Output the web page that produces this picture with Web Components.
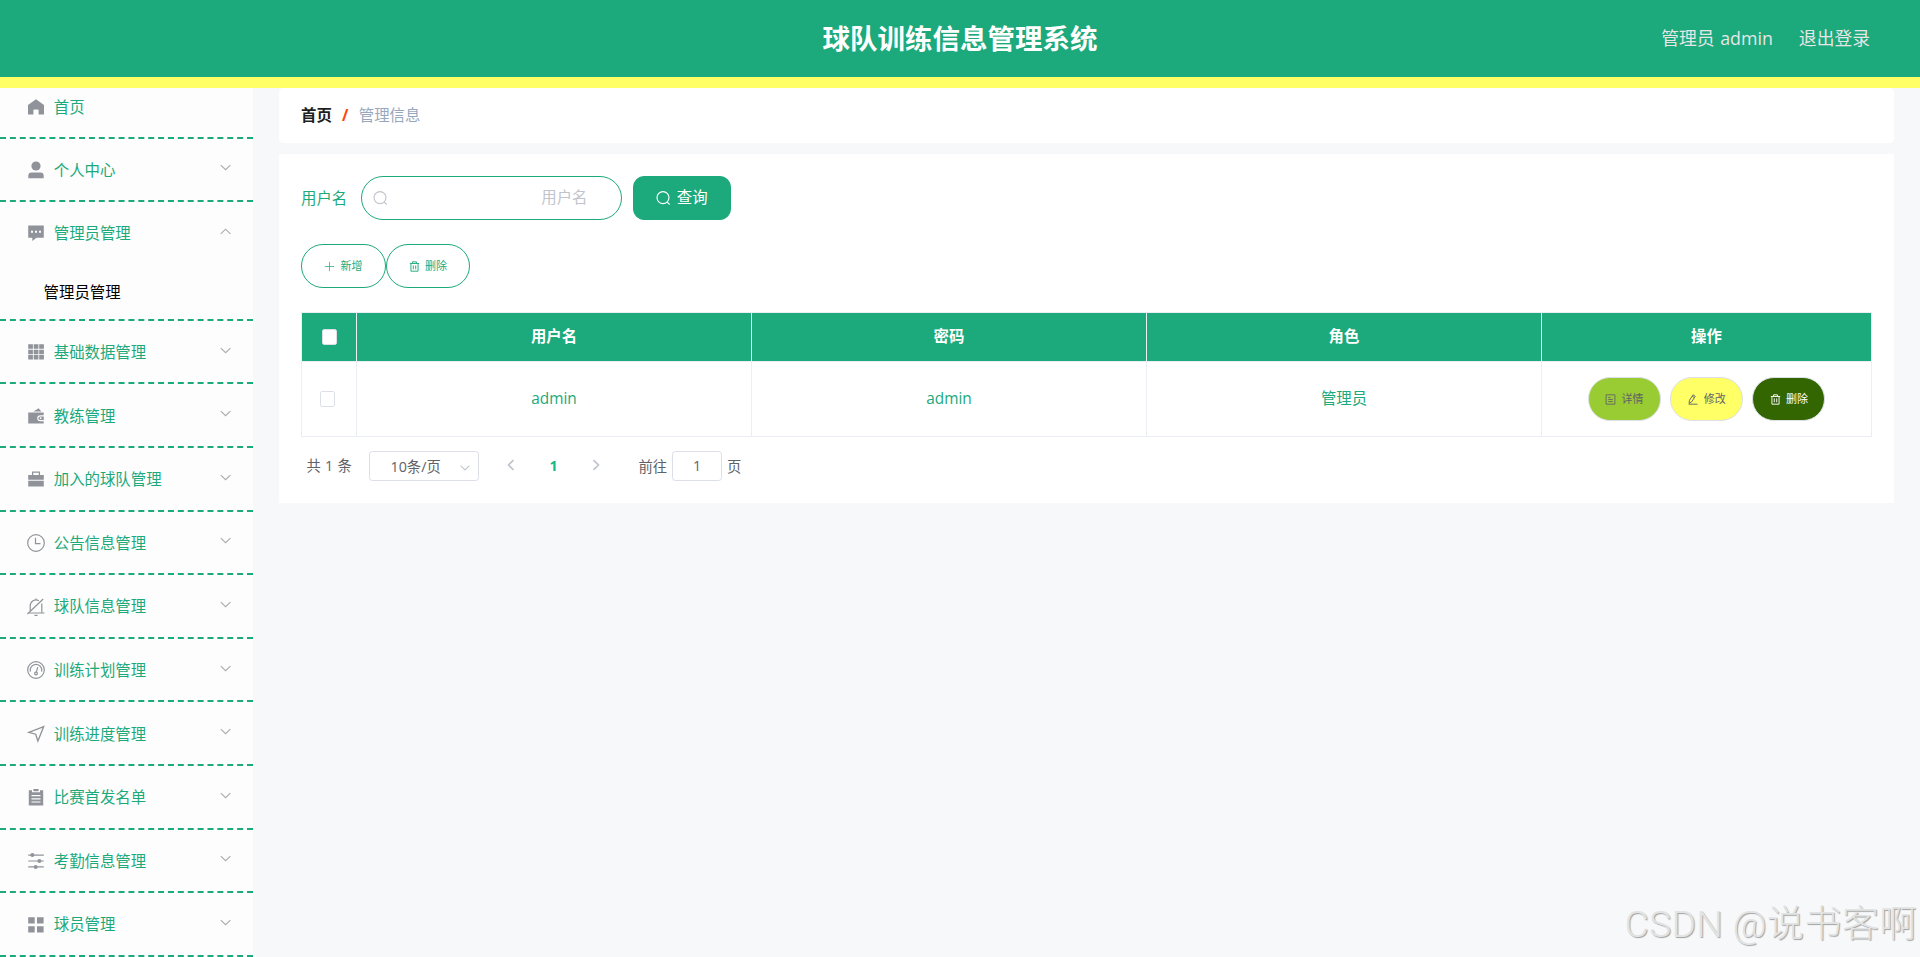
<!DOCTYPE html>
<html lang="zh-CN">
<head>
<meta charset="utf-8">
<title>球队训练信息管理系统</title>
<style>
    :root {
        --green: #1ca97b;
        --yellow: #ffff66;
        --page: #f7f8fa;
        --line: #ebeef5;
        --border: #dcdfe6;
        --muted: #909399;
    }

    body {
        margin: 0;
        height: 957px;
        overflow: hidden;
        background: var(--page);
        font-family: "Open Sans", "Noto Sans CJK SC", sans-serif;
        font-size: 15.4px;
        line-height: 1.4;
    }
</style>
</head>
<body>
<team-app></team-app>

<script>
// All glyphs share a 20x20 grid
const ICONS = {
    home: '<path fill="currentColor" d="M10 2.3 18 8v9.6h-5.4v-4.4a.8.8 0 0 0-.8-.8H8.2a.8.8 0 0 0-.8.8v4.4H2V8z"/>',
    user: '<circle cx="10" cy="6" r="4.6" fill="currentColor"/><path fill="currentColor" d="M2.3 18.2v-2.4a3.4 3.4 0 0 1 3.4-3.4h8.6a3.4 3.4 0 0 1 3.4 3.4v2.4z"/>',
    chat: '<path fill="currentColor" fill-rule="evenodd" d="M2.2 2.6h15.6v12.2H10.5L6.3 18v-3.2H2.2zM5 7.8v2h2v-2zM9 7.8v2h2v-2zM13 7.8v2h2v-2z"/>',
    grid: '<path fill="currentColor" d="M2.2 2.3h4.7v4.5H2.2zM7.7 2.3h4.7v4.5H7.7zM13.2 2.3h4.7v4.5h-4.7zM2.2 7.7h4.7v4.5H2.2zM7.7 7.7h4.7v4.5H7.7zM13.2 7.7h4.7v4.5h-4.7zM2.2 13.1h4.7v4.5H2.2zM7.7 13.1h4.7v4.5H7.7zM13.2 13.1h4.7v4.5h-4.7z"/>',
    wallet: '<path fill="currentColor" d="M7.5 5.4 12.6 2.3l2.8 3.1zM2.2 6.5h15.5v2.8h-3.5a3 3 0 0 0 0 6h3.5v2.3H2.2z"/><path fill="currentColor" d="M14.3 10.4h3.5v3.7h-3.5a1.85 1.85 0 0 1 0-3.7z"/><circle cx="14.6" cy="12.2" r=".9" fill="#fff"/>',
    briefcase: '<path fill="none" stroke="currentColor" stroke-width="1.3" d="M6.6 6.5V3.1h6.8v3.4"/><path fill="currentColor" d="M2.2 6h15.6v4.7H2.2zM2.2 11.7h15.6v5.9H2.2z"/>',
    clock: '<g fill="none" stroke="currentColor" stroke-width="1.2"><circle cx="10" cy="10" r="8.3"/><path d="M9.5 4.8v5.8h5"/></g>',
    bellOff: '<g fill="none" stroke="currentColor" stroke-width="1.2"><path d="M4.2 14.5V9a5.8 5.8 0 0 1 8.7-5.2M15.8 6.5V16M2 16h16.5M8.5 18.4h3M10 1.6v1.600M1.4 17 17.2 2"/></g>',
    meter: '<g fill="none" stroke="currentColor" stroke-width="1.2"><circle cx="10" cy="10" r="8.3"/><path d="M4.4 11.6a5.8 5.8 0 1 1 11.2 0M11.8 7.2l-1.5 5"/><circle cx="10" cy="13.5" r="1.4"/></g>',
    send: '<path fill="none" stroke="currentColor" stroke-width="1.3" d="M17.7 2.6 2.8 8.4 9.7 10.2 11.9 17z"/>',
    clipboard: '<path fill="currentColor" fill-rule="evenodd" d="M2.8 3.3H6v1.9h8V3.3h3.2v15.2H2.8zM5.5 8.1v1.1h9V8.1zM5.5 11.3v1.1h9v-1.1zM5.5 14.5v1.1h9v-1.1z"/><path fill="currentColor" d="M7.4 2h5.2v2.2H7.4z"/>',
    sliders: '<path stroke="currentColor" stroke-width="1.2" d="M2.2 4.1h15.6M2.2 10h15.6M2.2 15.9h15.6"/><g fill="currentColor"><circle cx="6.4" cy="4.1" r="2"/><circle cx="13.4" cy="10" r="2"/><circle cx="9.7" cy="15.9" r="2"/></g>',
    tiles: '<path fill="currentColor" d="M2.2 2.3h6.5v6.3H2.2zM11 2.3h6.6v6.3H11zM2.2 11.2h6.5v6.4H2.2zM11 11.2h6.6v6.4H11z"/>',
    down: '<path fill="none" stroke="currentColor" stroke-width="1.7" d="m2.7 6.2 7.3 7 7.3-7"/>',
    up: '<path fill="none" stroke="currentColor" stroke-width="1.7" d="m2.7 13.4 7.3-7 7.3 7"/>',
    left: '<path fill="none" stroke="currentColor" stroke-width="2.4" d="m13.5 3-7 7 7 7"/>',
    right: '<path fill="none" stroke="currentColor" stroke-width="2.4" d="m6.5 3 7 7-7 7"/>',
    search: '<g fill="none" stroke="currentColor" stroke-width="1.5"><circle cx="9.3" cy="8.8" r="8"/><path d="m14.5 14.5 3.800 3.500"/></g>',
    plus: '<path stroke="currentColor" stroke-width="1.3" d="M10 1.5v17M1.5 10h17"/>',
    trash: '<path fill="none" stroke="currentColor" stroke-width="1.7" d="M1.5 4.5h17M6.5 4V1.5h7V4M3.5 5v13.5h13V5M7.8 8v7M12.2 8v7"/>',
    doc: '<path fill="none" stroke="currentColor" stroke-width="1.6" d="M2 1.5h16v17H2zM6 6.5h4M6 10h8M6 13.8h8"/>',
    edit: '<path fill="none" stroke="currentColor" stroke-width="1.7" d="M4.5 11.5 11 1.5l4 2.700-6.500 10L3.800 17zM9.500 4l4 2.700M3 18.500h16"/>'
};

function define(name, html) {
    const template = document.createElement('template');
    template.innerHTML = html;
    customElements.define(name, class extends HTMLElement {
        constructor() {
            super();
            this.attachShadow({ mode: 'open' }).appendChild(template.content.cloneNode(true));
        }
    });
}

class TeamIcon extends HTMLElement {
    constructor() {
        super();
        this.shadow = this.attachShadow({ mode: 'open' });
    }

    connectedCallback() {
        this.shadow.innerHTML = `
            <style>
            :host { display: inline-flex; flex: none; width: var(--size, 20px); height: var(--size, 20px); }
            svg { width: 100%; height: 100%; }
            </style>
            <svg viewBox="0 0 20 20">${ICONS[this.getAttribute('name')]}</svg>
        `;
    }
}
customElements.define('team-icon', TeamIcon);

// Sidebar entry, the default slot takes the submenu rows
class MenuItem extends HTMLElement {
    constructor() {
        super();
        this.shadow = this.attachShadow({ mode: 'open' });
    }

    connectedCallback() {
        const arrow = this.getAttribute('arrow');
        this.shadow.innerHTML = `
            <style>
            :host { display: block; border-bottom: 2px dashed var(--green); }
            .title {
                display: flex;
                align-items: center;
                height: 61.6px;
                padding: 0 20.4px 0 25.6px;
                color: var(--green);
            }
            .title > team-icon { color: var(--muted); margin-top: 1px; }
            .title span { flex: 1; margin-left: 8.2px; padding-top: 2.4px; }
            .title .arrow { --size: 13.2px; color: #a9abb0; margin-top: -3px; }
            :host([icon=home]) .title { padding-top: 2px; height: 59.6px; }
            </style>
            <div class="title">
                <team-icon name="${this.getAttribute('icon')}"></team-icon>
                <span>${this.getAttribute('label')}</span>
                ${arrow ? `<team-icon class="arrow" name="${arrow}"></team-icon>` : ''}
            </div>
            <slot></slot>
        `;
    }
}
customElements.define('menu-item', MenuItem);

define('menu-sub', `
    <style>
    :host { display: flex; align-items: center; box-sizing: border-box; height: 55.2px; padding: 2px 0 0 43.6px; color: #000; }
    </style>
    <slot></slot>
`);

define('team-sidebar', `
    <style>
    :host { display: block; flex: none; width: 253px; background: #fdfdfd; overflow: hidden; }
    /* the first row starts underneath the header */
    nav { margin-top: -13.1px; }
    </style>
    <nav>
        <menu-item icon="home" label="首页"></menu-item>
        <menu-item icon="user" label="个人中心" arrow="down"></menu-item>
        <menu-item icon="chat" label="管理员管理" arrow="up"><menu-sub>管理员管理</menu-sub></menu-item>
        <menu-item icon="grid" label="基础数据管理" arrow="down"></menu-item>
        <menu-item icon="wallet" label="教练管理" arrow="down"></menu-item>
        <menu-item icon="briefcase" label="加入的球队管理" arrow="down"></menu-item>
        <menu-item icon="clock" label="公告信息管理" arrow="down"></menu-item>
        <menu-item icon="bellOff" label="球队信息管理" arrow="down"></menu-item>
        <menu-item icon="meter" label="训练计划管理" arrow="down"></menu-item>
        <menu-item icon="send" label="训练进度管理" arrow="down"></menu-item>
        <menu-item icon="clipboard" label="比赛首发名单" arrow="down"></menu-item>
        <menu-item icon="sliders" label="考勤信息管理" arrow="down"></menu-item>
        <menu-item icon="tiles" label="球员管理" arrow="down"></menu-item>
    </nav>
`);

define('team-header', `
    <style>
    :host {
        display: grid;
        grid-template-columns: 1fr auto 1fr;
        align-items: center;
        box-sizing: border-box;
        height: 88px;
        padding: 0 50px;
        border-bottom: 11px solid var(--yellow);
        background: var(--green);
        color: #e6e6e6;
        font-size: 17.8px;
    }
    h1 { grid-column: 2; margin: 0; padding-top: 1px; font-size: 27.5px; line-height: 40px; color: #fff; }
    .user { display: flex; justify-content: flex-end; gap: 26px; word-spacing: 1px; }
    </style>
    <h1>球队训练信息管理系统</h1>
    <div class="user"><span>管理员 admin</span><span>退出登录</span></div>
`);

define('team-crumbs', `
    <style>
    :host {
        display: flex;
        align-items: center;
        box-sizing: border-box;
        height: 55px;
        padding: 1px 22px 0;
        border-radius: 4.4px;
        background: #fff;
    }
    b { color: #1d1f22; }
    i { margin: 0 10.3px; font-style: normal; font-weight: 700; color: #ff4400; }
    span { color: #97a8be; }
    </style>
    <b>首页</b><i>/</i><span>管理信息</span>
`);

class TeamButton extends HTMLElement {
    constructor() {
        super();
        this.shadow = this.attachShadow({ mode: 'open' });
    }

    connectedCallback() {
        this.shadow.innerHTML = `
            <style>
            :host {
                display: inline-flex;
                align-items: center;
                justify-content: center;
                gap: 5.5px;
                box-sizing: border-box;
                height: 44px;
                width: 84.5px;
                border: 1px solid var(--green);
                border-radius: 22px;
                background: #fff;
                color: var(--green);
                font-size: 11px;
                --size: 11px;
            }
            :host([kind=query]) {
                width: 98px;
                border-radius: 11px;
                background: var(--green);
                color: #fff;
                font-size: 15.4px;
                --size: 15px;
            }
            :host([kind=detail]), :host([kind=edit]), :host([kind=remove]) {
                width: 73px;
                border-color: var(--border);
                color: #606266;
            }
            :host([kind=detail]) { background: #99cc33; }
            :host([kind=edit]) { background: #ffff66; }
            :host([kind=remove]) { background: #336600; color: #fff; }
            </style>
            <team-icon name="${this.getAttribute('icon')}"></team-icon>
            <span><slot></slot></span>
        `;
    }
}
customElements.define('team-button', TeamButton);

define('search-form', `
    <style>
    :host { display: flex; align-items: center; height: 44px; }
    label { width: 60px; padding-top: 2px; color: var(--green); }
    .input {
        display: flex;
        align-items: center;
        justify-content: space-between;
        box-sizing: border-box;
        width: 261px;
        height: 44px;
        margin-right: 11px;
        padding: 0 33.5px 0 10.5px;
        border: 1px solid var(--green);
        border-radius: 22px;
        color: #c0c4cc;
        --size: 15px;
    }
    </style>
    <label>用户名</label>
    <div class="input"><team-icon name="search"></team-icon><span>用户名</span></div>
    <team-button kind="query" icon="search">查询</team-button>
`);

define('check-box', `
    <style>
    :host {
        display: inline-block;
        box-sizing: border-box;
        width: 15.4px;
        height: 15.4px;
        border: 1px solid var(--border);
        border-radius: 2.2px;
        background: #fff;
    }
    </style>
`);

define('user-table', `
    <style>
    :host {
        display: grid;
        grid-template-columns: 55px 395px 395px 395px 330px;
        grid-template-rows: 49px 75px;
        border: solid var(--line);
        border-width: 1px 0 0 1px;
        color: var(--green);
    }
    div {
        display: flex;
        align-items: center;
        justify-content: center;
        border: solid var(--line);
        border-width: 0 1px 1px 0;
    }
    .head { background: var(--green); color: #fff; font-weight: 700; }
    .head check-box { margin-left: 1px; }
    .row check-box { margin-right: 3px; }
    .actions { gap: 9.3px; }
    </style>
    <div class="head"><check-box></check-box></div>
    <div class="head">用户名</div>
    <div class="head">密码</div>
    <div class="head">角色</div>
    <div class="head">操作</div>
    <div class="row"><check-box></check-box></div>
    <div>admin</div>
    <div>admin</div>
    <div>管理员</div>
    <div class="actions">
        <team-button kind="detail" icon="doc">详情</team-button>
        <team-button kind="edit" icon="edit">修改</team-button>
        <team-button kind="remove" icon="trash">删除</team-button>
    </div>
`);

define('team-pager', `
    <style>
    :host { display: flex; align-items: center; height: 30px; padding-left: 5.5px; font-size: 14.3px; color: #606266; }
    .box {
        display: flex;
        align-items: center;
        justify-content: center;
        box-sizing: border-box;
        height: 30px;
        border: 1px solid var(--border);
        border-radius: 3.3px;
    }
    .total { width: 62px; word-spacing: .6px; }
    .size { width: 110px; justify-content: space-between; padding: 0 7px 0 21px; --size: 12px; }
    .size span, .jump, .unit { padding-top: 2px; }
    .size team-icon, .turn { color: #c0c4cc; }
    .size team-icon { margin-top: 3px; }
    .turn { --size: 14px; margin: -2px 25px 0; }
    .page { width: 21px; padding-left: 1px; box-sizing: border-box; text-align: center; font-weight: 700; color: #13b98a; }
    .jump { margin-left: 11px; }
    .goto { width: 50px; margin: 0 5px; }
    </style>
    <span class="total">共 1 条</span>
    <div class="box size"><span>10条/页</span><team-icon name="down"></team-icon></div>
    <team-icon class="turn" name="left"></team-icon>
    <span class="page">1</span>
    <team-icon class="turn" name="right"></team-icon>
    <span class="jump">前往</span>
    <div class="box goto">1</div>
    <span class="unit">页</span>
`);

define('team-panel', `
    <style>
    :host { display: block; box-sizing: border-box; height: 349px; padding: 22px; background: #fff; }
    .tools { display: flex; margin: 24px 0; }
    team-pager { margin-top: 14px; }
    </style>
    <search-form></search-form>
    <div class="tools">
        <team-button icon="plus">新增</team-button>
        <team-button icon="trash">删除</team-button>
    </div>
    <user-table></user-table>
    <team-pager></team-pager>
`);

define('team-app', `
    <style>
    :host { display: flex; flex-direction: column; height: 957px; }
    .body { display: flex; flex: 1; min-height: 0; }
    main { display: flex; flex: 1; flex-direction: column; gap: 11px; padding: 0 26px; }
    .mark {
        position: absolute;
        right: 3px;
        bottom: 5px;
        font-family: Roboto, "Noto Sans CJK SC", sans-serif;
        font-size: 37px;
        font-weight: 300;
        line-height: 54px;
        letter-spacing: .5px;
        white-space: nowrap;
        color: #e2e4e4;
        text-shadow: 1px 1px 1px #a0a0a0;
    }
    </style>
    <team-header></team-header>
    <div class="body">
        <team-sidebar></team-sidebar>
        <main>
            <team-crumbs></team-crumbs>
            <team-panel></team-panel>
        </main>
    </div>
    <div class="mark">CSDN @说书客啊</div>
`);
</script>
</body>
</html>
